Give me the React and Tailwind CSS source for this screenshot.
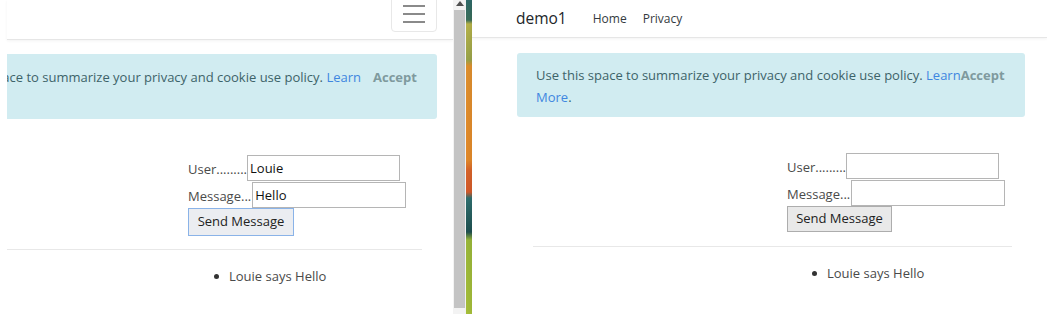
import React from 'react';

const font = "font-['Open_Sans','Liberation_Sans',sans-serif]";

function CookieAlertLeft() {
  return (
    <div className="mt-[14px] mr-[16px] flex h-[65px] items-start rounded-r-[3px] bg-[#d1ecf1] pt-[12px] text-[13px] leading-[22px]">
      <div className="flex w-[354px] shrink-0 justify-end overflow-hidden whitespace-nowrap text-[#3d6369]">
        <span className="shrink-0">
          Use this space to summarize your privacy and cookie use policy.{' '}
          <a className="text-[#3f86e0]">Learn</a>
        </span>
      </div>
      <button className="ml-[12px] font-bold text-[#7f9a9e]">Accept</button>
    </div>
  );
}

function CookieAlertRight() {
  return (
    <div className="mt-[15px] ml-[45px] mr-[22px] flex h-[64px] items-start rounded-[3px] bg-[#d1ecf1] pl-[19px] pt-[11px] text-[13px] leading-[22px]">
      <div className="whitespace-nowrap text-[#3d6369]">
        Use this space to summarize your privacy and cookie use policy.{' '}
        <a className="text-[#3f86e0]">Learn</a>
        <br />
        <a className="text-[#3f86e0]">More</a>.
      </div>
      <button className="font-bold text-[#7f9a9e]">Accept</button>
    </div>
  );
}

function ChatForm({ user, message, focused }) {
  return (
    <div className="text-[13px] text-[#4a4a4a]">
      <div className="flex h-[27px] items-start">
        <span className="mt-[5px]">User.........</span>
        <input
          readOnly
          value={user}
          className="h-[26px] w-[153px] border border-[#b5b5b5] bg-white px-[2px] text-[13px] text-[#111] outline-none"
        />
      </div>
      <div className="flex h-[26px] items-start">
        <span className="mt-[5px] mr-[1px]">Message...</span>
        <input
          readOnly
          value={message}
          className="h-[26px] w-[154px] border border-[#b5b5b5] bg-white px-[2px] text-[13px] text-[#111] outline-none"
        />
      </div>
      {focused ? (
        <button className="h-[28px] w-[106px] border border-[#8ab3e8] bg-[#ebedf1] text-[13px] text-[#222]">
          Send Message
        </button>
      ) : (
        <button className="h-[26px] w-[105px] border border-[#adadad] bg-[#e9e9e9] text-[13px] text-[#222]">
          Send Message
        </button>
      )}
    </div>
  );
}

function MessageItem() {
  return (
    <div className="flex items-center text-[13px] text-[#4a4a4a]">
      <span className="mr-[10px] inline-block h-[5px] w-[5px] rounded-full bg-[#333]" />
      Louie says Hello
    </div>
  );
}

function LeftPane() {
  return (
    <div className="w-[453px] shrink-0 pl-[7px]">
      <div className="flex h-[40px] justify-end border-b border-[#e6e6e6] pr-[16px] shadow-[0_1px_3px_rgba(0,0,0,0.05)]">
        <div className="-mt-[4px] flex h-[36px] w-[46px] flex-col items-center justify-end gap-[6px] rounded-b-[4px] border border-[#e8e8e8] pb-[8px]">
          <span className="h-[2px] w-[22px] bg-[#8a8a8a]" />
          <span className="h-[2px] w-[22px] bg-[#8a8a8a]" />
          <span className="h-[2px] w-[22px] bg-[#8a8a8a]" />
        </div>
      </div>
      <CookieAlertLeft />
      <div className="mt-[36px] pl-[181px]">
        <ChatForm user="Louie" message="Hello" focused />
      </div>
      <div className="mt-[13px] mr-[31px] border-t border-[#e8e8e8]" />
      <div className="mt-[17px] pl-[207px]">
        <MessageItem />
      </div>
    </div>
  );
}

function Scrollbar() {
  return (
    <div className="flex w-[13px] shrink-0 flex-col bg-[#f3f3f3]">
      <div className="flex h-[10px] justify-center pt-[1px]">
        <div className="h-0 w-0 border-x-[4px] border-b-[5px] border-x-transparent border-b-[#505050]" />
      </div>
      <div className="mx-[1px] h-[298px] bg-[#c4c4c4]" />
    </div>
  );
}

function Strip() {
  return (
    <div className="w-[6px] shrink-0 bg-[linear-gradient(to_bottom,#2f6a6a_0px,#3b6f5a_20px,#b8b44a_24px,#9aa44a_60px,#e0902e_66px,#e38a2a_160px,#d9652a_170px,#d45a2a_192px,#2f7070_198px,#1f5050_232px,#9ab83a_240px,#a6bf3a_314px)]" />
  );
}

function RightPane() {
  return (
    <div className="flex-1 shadow-[-3px_0_6px_rgba(0,0,0,0.06)]">
      <div className="flex h-[38px] items-center border-b border-[#e6e6e6] pl-[44px] shadow-[0_1px_3px_rgba(0,0,0,0.05)]">
        <span className="text-[15.5px] text-[#212529]">demo1</span>
        <span className="ml-[26px] text-[12px] text-[#343a40]">Home</span>
        <span className="ml-[16px] text-[12px] text-[#343a40]">Privacy</span>
      </div>
      <CookieAlertRight />
      <div className="mt-[36px] pl-[315px]">
        <ChatForm user="" message="" />
      </div>
      <div className="mt-[14px] ml-[61px] mr-[35px] border-t border-[#e8e8e8]" />
      <div className="mt-[17px] pl-[340px]">
        <MessageItem />
      </div>
    </div>
  );
}

export default function App() {
  return (
    <div className={`flex h-[314px] w-[1047px] overflow-hidden bg-white ${font}`}>
      <LeftPane />
      <Scrollbar />
      <Strip />
      <RightPane />
    </div>
  );
}
